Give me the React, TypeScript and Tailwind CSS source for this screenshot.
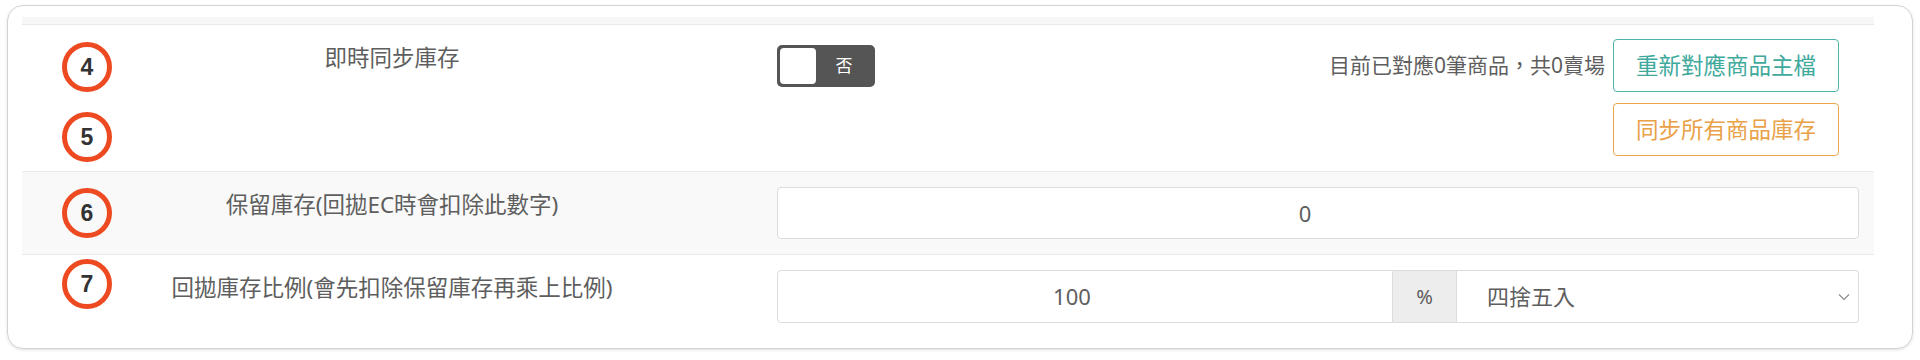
const font = {
  fontFamily: '"Noto Sans", "Noto Sans CJK TC", sans-serif',
};

function Marker({ n, className }: { n: number; className: string }) {
  return (
    <div
      className={`absolute w-[50px] h-[50px] rounded-full border-[5px] border-[#ee4a22] flex items-center justify-center text-[23px] font-bold text-[#333] ${className}`}
      style={{ fontFamily: '"Liberation Sans", Arial, sans-serif' }}
    >
      {n}
    </div>
  );
}

function Label({ children }: { children: React.ReactNode }) {
  return (
    <div className="w-[755px] shrink-0 pr-[15px] pt-[16px] text-center text-[22.5px] leading-[34px] text-[#5e5e5e]">
      {children}
    </div>
  );
}

export default function App() {
  return (
    <div className="w-[1920px] h-[360px] bg-white px-[7px] pt-[5px]" style={font}>
      <div className="rounded-[16px] border border-[#d2d2d2] shadow-[0_1px_3px_rgba(0,0,0,0.12)] pl-[14px] pr-[38px] pt-[11px] pb-[10px]">

        {/* tail of previous row */}
        <div className="h-[8px] bg-[#f7f7f7] border-b border-[#e9e9e9]" />

        {/* 即時同步庫存 */}
        <div className="relative flex h-[146px]">
          <Marker n={4} className="left-[40px] top-[17px]" />
          <Marker n={5} className="left-[40px] top-[87px]" />

          <Label>即時同步庫存</Label>

          <div className="flex-1 flex pr-[15px] pt-[14px]">
            <div className="h-[53px] flex items-center">
              <div className="w-[98px] h-[42px] rounded-[5px] bg-[#555] flex items-center p-[3px]">
                <div className="w-[36px] h-[36px] rounded-[4px] bg-white" />
                <div className="flex-1 text-center text-white text-[17px]">否</div>
              </div>
            </div>

            <div className="ml-auto mr-[20px] flex items-start gap-[8px]">
              <div className="h-[53px] flex items-center text-[21px] text-[#5e5e5e]">
                目前已對應0筆商品，共0賣場
              </div>
              <div className="flex flex-col gap-[11px]">
                <button className="w-[226px] h-[53px] rounded-[4px] border border-[#4db3a8] bg-white text-[22.5px] text-[#3fa99c]">
                  重新對應商品主檔
                </button>
                <button className="w-[226px] h-[53px] rounded-[4px] border border-[#eea64c] bg-white text-[22.5px] text-[#e9a148]">
                  同步所有商品庫存
                </button>
              </div>
            </div>
          </div>
        </div>

        {/* 保留庫存 */}
        <div className="relative flex border-t border-[#e9e9e9] bg-[#f9f9f9] h-[83px]">
          <Marker n={6} className="left-[40px] top-[16px]" />
          <Label>保留庫存(回拋EC時會扣除此數字)</Label>
          <div className="flex-1 pr-[15px] pt-[15px]">
            <div className="h-[52px] rounded-[4px] border border-[#dcdcdc] bg-white flex items-center justify-center pl-[12px] pr-[38px] text-[22px] text-[#5e5e5e]">
              0
            </div>
          </div>
        </div>

        {/* 回拋庫存比例 */}
        <div className="relative flex border-t border-[#e9e9e9] h-[84px]">
          <Marker n={7} className="left-[40px] top-[4px]" />
          <Label>回拋庫存比例(會先扣除保留庫存再乘上比例)</Label>
          <div className="flex-1 pr-[15px] pt-[15px]">
            <div className="h-[53px] flex">
              <div className="w-[616px] rounded-l-[4px] border border-[#dcdcdc] bg-white flex items-center justify-center pl-[12px] pr-[38px] text-[22px] text-[#5e5e5e]">
                100
              </div>
              <div className="w-[64px] border-y border-r border-[#dcdcdc] bg-[#ededed] flex items-center justify-center text-[20px] text-[#5e5e5e]">
                %
              </div>
              <div className="flex-1 rounded-r-[4px] border-y border-r border-[#dcdcdc] bg-white flex items-center pl-[30px] pr-[8px] text-[22px] text-[#5e5e5e]">
                <span className="flex-1">四捨五入</span>
                <svg width="12" height="8" viewBox="0 0 12 8" fill="none">
                  <polyline points="1,1.5 6,6.5 11,1.5" stroke="#888" strokeWidth="1.1" />
                </svg>
              </div>
            </div>
          </div>
        </div>

      </div>
    </div>
  );
}
